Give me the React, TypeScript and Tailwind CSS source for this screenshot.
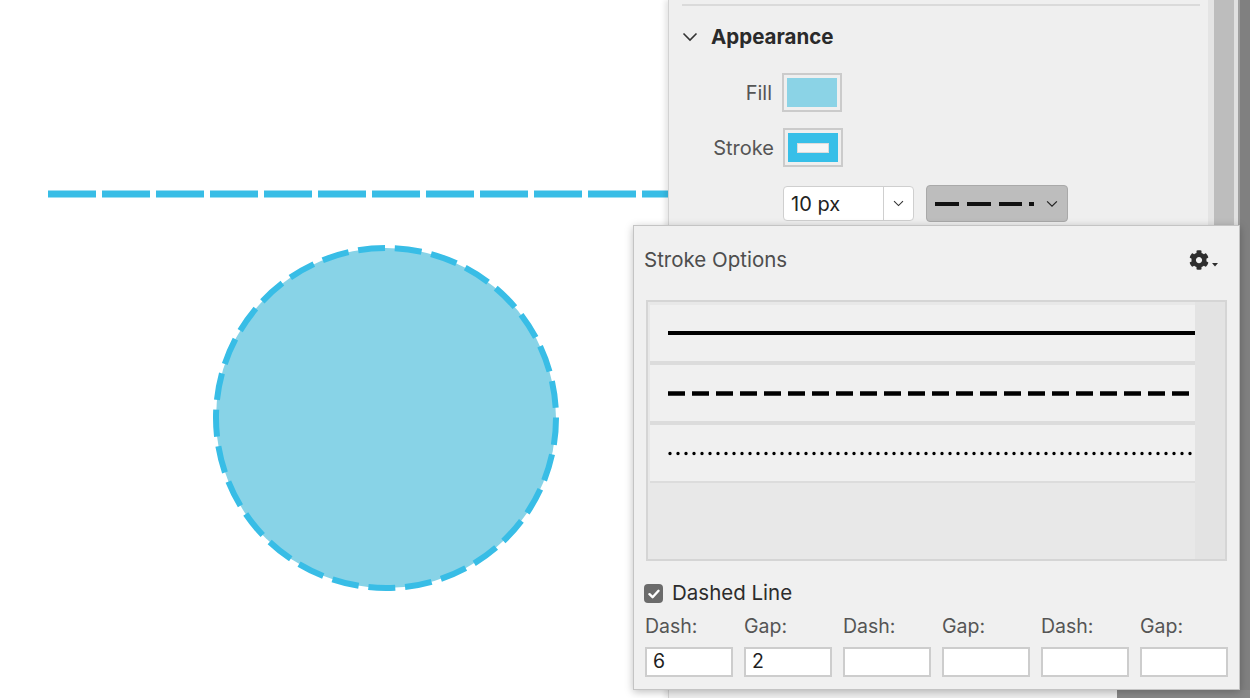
import { FaCog } from 'react-icons/fa';

// Canvas with the sample shapes
function Canvas() {
  return (
    <div className="w-[668px] h-full bg-white shrink-0">
      <svg width="668" height="698" className="block">
        <line x1="48" y1="194" x2="668" y2="194" stroke="#38bde6" strokeWidth="7" strokeDasharray="48 6" />
        <circle cx="386" cy="418" r="170" fill="#88d3e7" stroke="#38bde6" strokeWidth="6" strokeDasharray="27 9.8" />
      </svg>
    </div>
  );
}

function Chevron({ className }: { className?: string }) {
  return (
    <svg viewBox="0 0 16 10" className={className} fill="none" stroke="currentColor" strokeWidth="1.6">
      <path d="M1.5 1.5 L8 8 L14.5 1.5" />
    </svg>
  );
}

function Swatch({ children }: { children: React.ReactNode }) {
  return (
    <div className="w-[60px] h-[39px] border-2 border-[#cbcbcb] p-[3px] bg-[#efefef]">{children}</div>
  );
}

// Side inspector panel
function Inspector() {
  return (
    <div className="w-[540px] h-full bg-[#efefef] border-l border-[#d2d2d2] shadow-[-3px_0_5px_rgba(0,0,0,0.10)] shrink-0">
      <div className="mt-[4px] ml-[13px] mr-[8px] h-[2px] bg-[#dadada]" />

      <div className="mt-[19px] pl-[13px] flex items-center gap-[13px] h-[24px]">
        <Chevron className="w-[16px] h-[10px] text-[#333]" />
        <span className="text-[20.5px] font-bold text-[#2a2a2a]">Appearance</span>
      </div>

      <div className="mt-[24px] flex items-center">
        <span className="w-[103px] text-right text-[20px] text-[#555]">Fill</span>
        <div className="ml-[10px]">
          <Swatch>
            <div className="w-full h-full bg-[#8bd3e6]" />
          </Swatch>
        </div>
      </div>

      <div className="mt-[16px] flex items-center">
        <span className="w-[105px] text-right text-[20px] text-[#555]">Stroke</span>
        <div className="ml-[9px]">
          <Swatch>
            <div className="w-full h-full bg-[#37bfe8] flex items-center justify-center">
              <div className="w-[32px] h-[10px] bg-[#f6f6f6] border border-[#dcdcdc]" />
            </div>
          </Swatch>
        </div>
      </div>

      <div className="mt-[18px] pl-[114px] flex items-center gap-[12px]">
        <div className="w-[131px] h-[35px] flex bg-white border border-[#cfcfcf] rounded-[4px]">
          <div className="flex-1 flex items-center pl-[7px] text-[20px] text-[#222]">10 px</div>
          <div className="w-[30px] border-l border-[#cfcfcf] flex items-center justify-center">
            <Chevron className="w-[11px] h-[7px] text-[#333]" />
          </div>
        </div>
        <div className="w-[142px] h-[37px] bg-[#bdbdbd] border border-[#a9a9a9] rounded-[4px] flex items-center pl-[8px]">
          <svg width="102" height="8" className="block">
            <line x1="0" y1="4" x2="102" y2="4" stroke="#111" strokeWidth="4" strokeDasharray="24 8 24 8 23 7 5 20" />
          </svg>
          <Chevron className="ml-[9px] w-[12px] h-[8px] text-[#222]" />
        </div>
      </div>
    </div>
  );
}

function StrokeRow({ children }: { children: React.ReactNode }) {
  return (
    <div className="h-[56px] bg-[#f0f0f0] flex items-center pl-[18px] overflow-hidden">{children}</div>
  );
}

// Floating stroke options popover
function StrokeOptions() {
  const labels = ['Dash:', 'Gap:', 'Dash:', 'Gap:', 'Dash:', 'Gap:'];
  const values = ['6', '2', '', '', '', ''];
  return (
    <div className="absolute left-[633px] top-[225px] w-[607px] h-[465px] bg-[#f0f0f0] border border-[#c4c4c4] shadow-[0_2px_8px_rgba(0,0,0,0.25)]">
      <div className="mt-[22px] h-[24px] flex items-center justify-between pl-[10px] pr-[21px]">
        <span className="text-[20.5px] text-[#4d4d4d]">Stroke Options</span>
        <div className="flex items-end gap-[3px] text-[#2e2e2e]">
          <FaCog size={20} />
          <svg width="6" height="4" className="mb-[3px]"><path d="M0 0 H6 L3 3.5 Z" fill="#2e2e2e" /></svg>
        </div>
      </div>

      <div className="mt-[28px] ml-[12px] w-[581px] h-[261px] border-2 border-[#d5d5d5] flex bg-[#e8e8e8]">
        <div className="w-[547px] pl-[2px] pt-[3px] flex flex-col">
          <StrokeRow>
            <svg width="527" height="4" className="block"><line x1="0" y1="2" x2="527" y2="2" stroke="#000" strokeWidth="4" /></svg>
          </StrokeRow>
          <div className="h-[4px] bg-[#dcdcdc]" />
          <StrokeRow>
            <svg width="527" height="5" className="block"><line x1="0" y1="2.5" x2="521" y2="2.5" stroke="#000" strokeWidth="4.5" strokeDasharray="17 7" /></svg>
          </StrokeRow>
          <div className="h-[4px] bg-[#dcdcdc]" />
          <StrokeRow>
            <svg width="527" height="5" className="block"><line x1="2" y1="2.5" x2="524" y2="2.5" stroke="#000" strokeWidth="3.4" strokeLinecap="round" strokeDasharray="0 8" /></svg>
          </StrokeRow>
          <div className="h-[2px] bg-[#dcdcdc]" />
        </div>
        <div className="flex-1 bg-[#e3e3e3]" />
      </div>

      <div className="mt-[23px] ml-[10px] flex items-center gap-[9px] h-[19px]">
        <div className="w-[19px] h-[19px] rounded-[4px] bg-[#6b6b6b] flex items-center justify-center">
          <svg width="12" height="10" viewBox="0 0 12 10"><path d="M1.5 5.2 L4.6 8.2 L10.5 1.8" stroke="#fff" strokeWidth="2.4" fill="none" strokeLinecap="round" strokeLinejoin="round" /></svg>
        </div>
        <span className="text-[20.5px] text-[#2c2c2c]">Dashed Line</span>
      </div>

      <div className="mt-[12px] ml-[11px] w-[583px] grid grid-cols-6 gap-x-[11px]">
        {labels.map((l, i) => (
          <span key={i} className="text-[19.5px] leading-[22px] text-[#555]">{l}</span>
        ))}
        {values.map((v, i) => (
          <div key={i} className="mt-[10px] h-[30px] bg-white border-2 border-[#cdcdcd] flex items-center pl-[6px] text-[19.5px] text-[#1f1f1f]">
            {v}
          </div>
        ))}
      </div>
    </div>
  );
}

export default function App() {
  return (
    <div className="relative w-[1250px] h-[698px] overflow-hidden flex font-['Inter',sans-serif]">
      <Canvas />
      <Inspector />
      {/* scroll bar strip */}
      <div className="w-[6px] h-full bg-[#e4e4e4]" />
      <div className="w-[20px] h-full bg-[#bdbdbd]" />
      <div className="w-[6px] h-full bg-[#e0e0e0] border-r-2 border-[#a0a0a0]" />
      <div className="flex-1 h-full bg-[#808080]" />
      <div className="absolute left-[1117px] top-[690px] right-0 bottom-0 bg-[#888888]" />
      <StrokeOptions />
    </div>
  );
}
